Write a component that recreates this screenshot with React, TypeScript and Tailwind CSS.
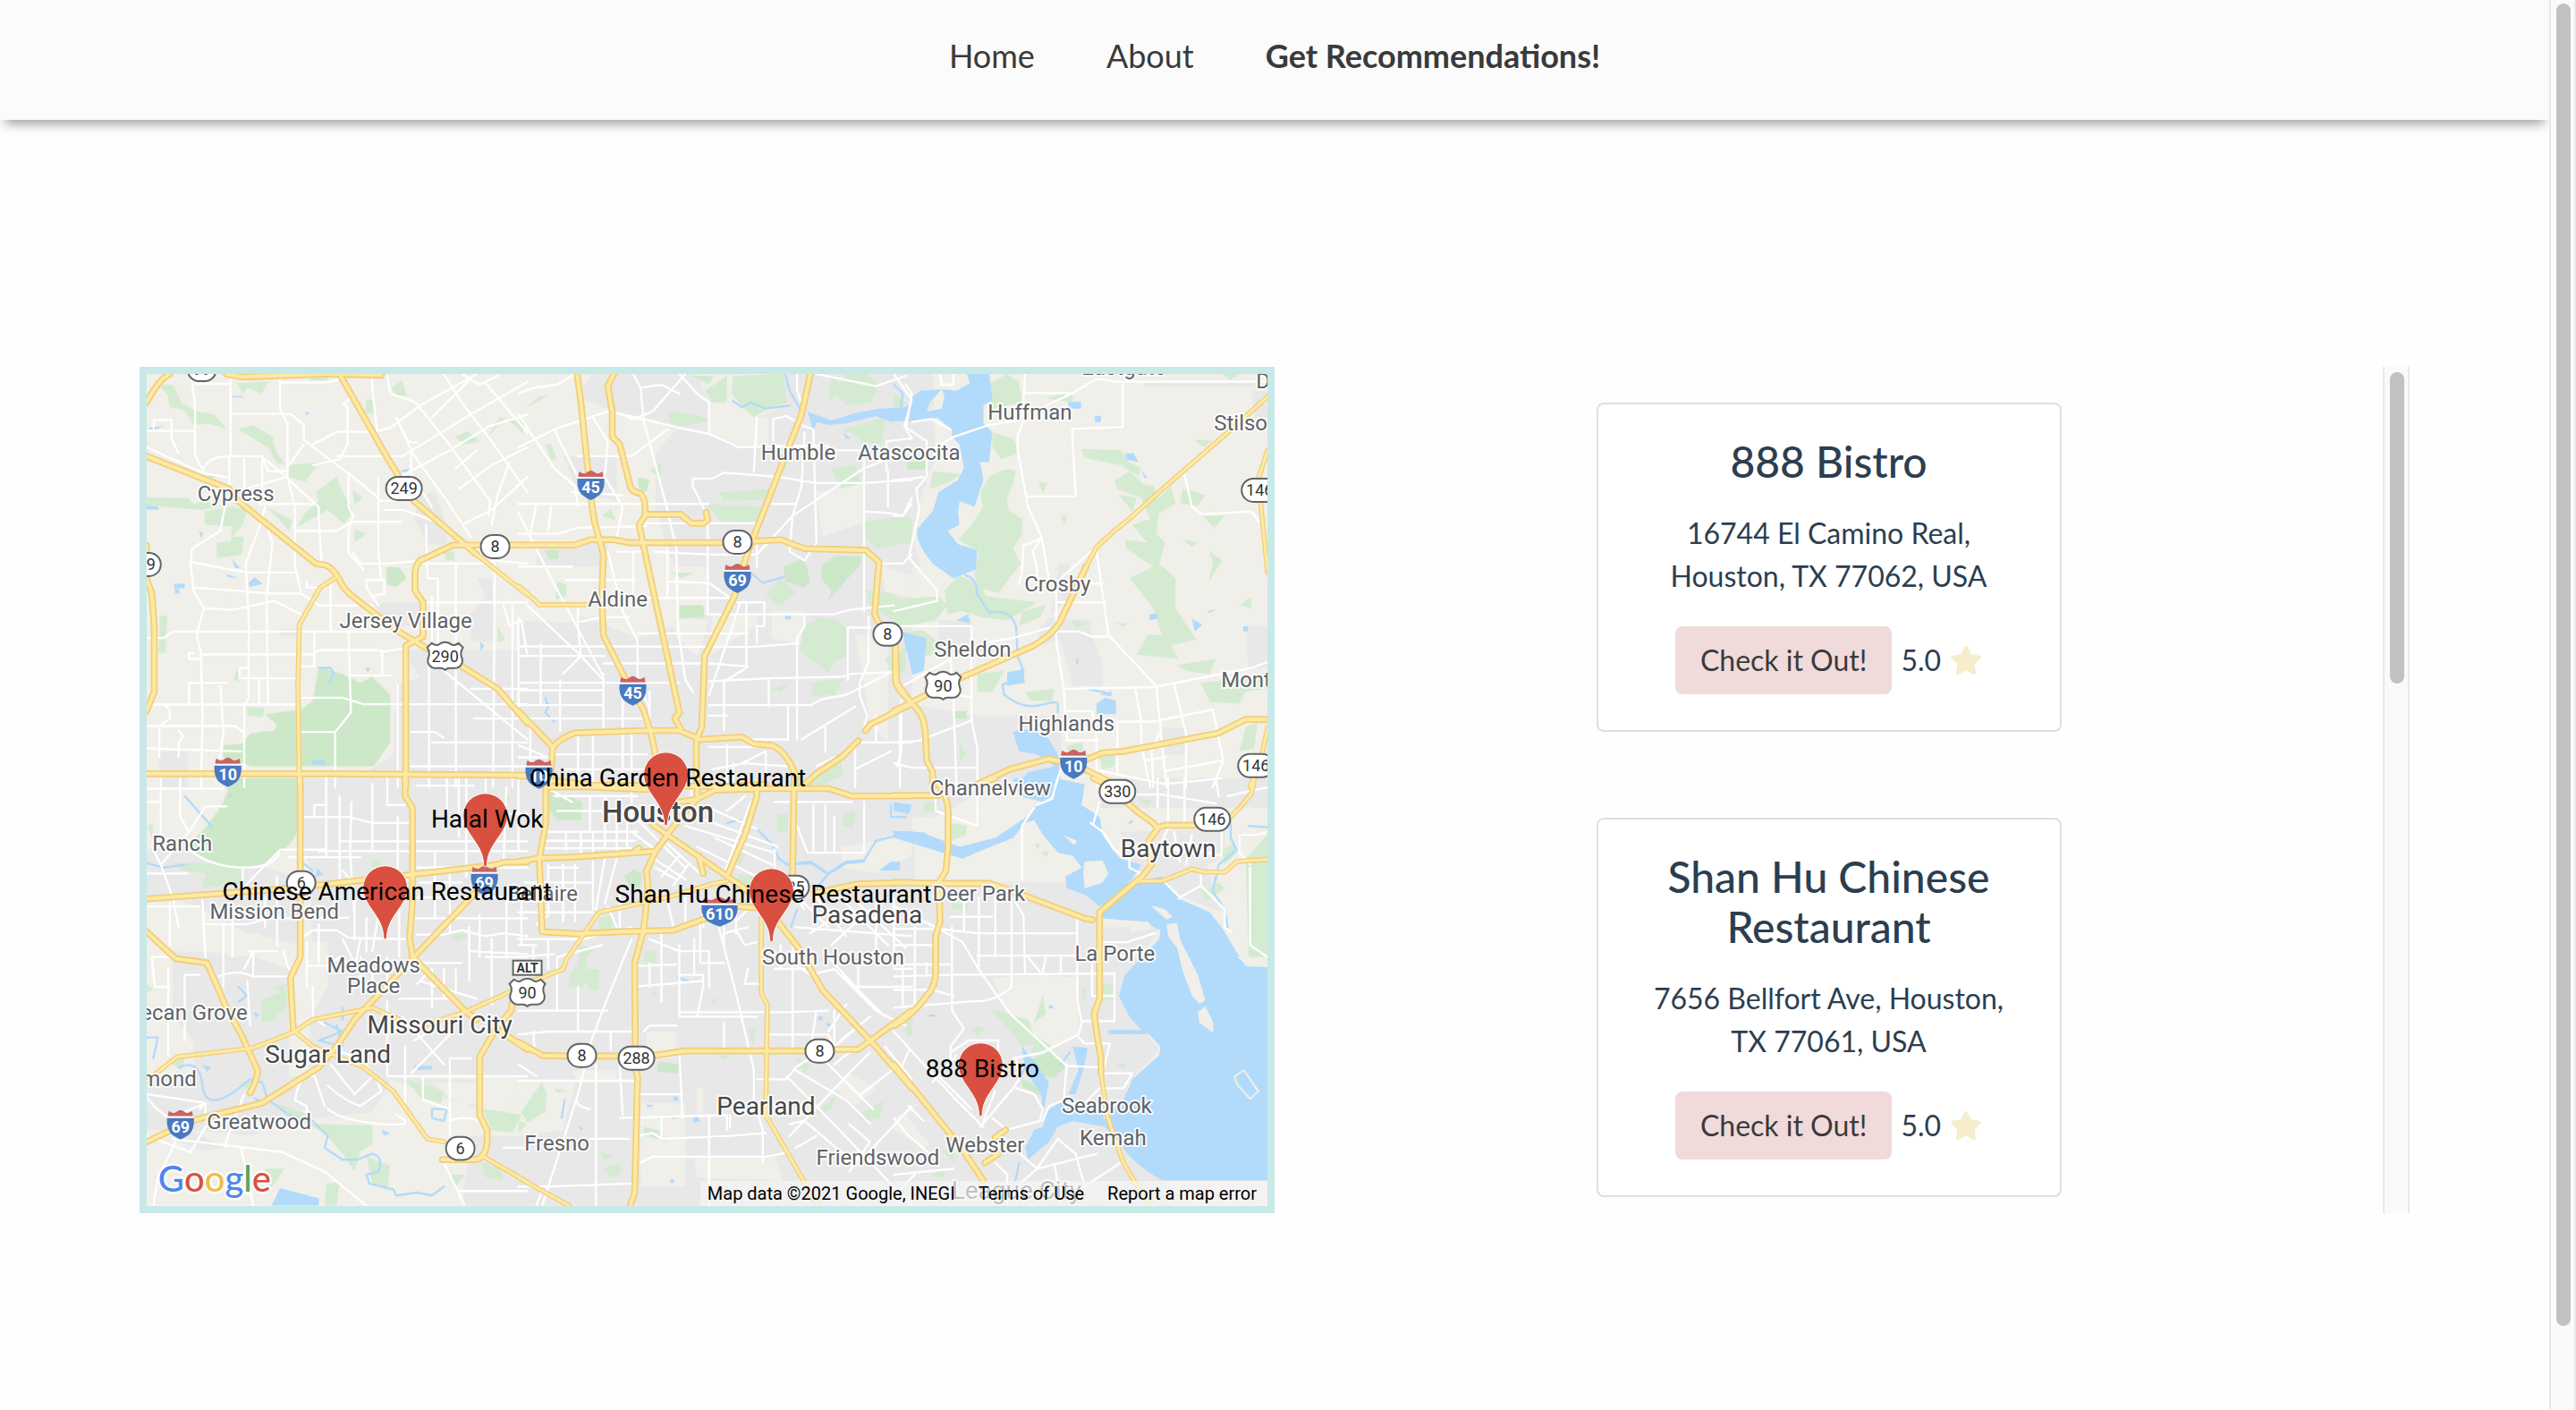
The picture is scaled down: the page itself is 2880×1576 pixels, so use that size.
import { FaStar } from "react-icons/fa";

type Tile = {
  x: number;
  y: number;
  urban: string;
  land?: string;
  parks: string;
  forest?: string;
  water: string;
  rivers: string;
  islands?: string;
  streets: string;
  highways: string;
  roads: string;
};

// Every tile is drawn at three units per map pixel.
const tiles: Tile[] = [
  {
    x: 0,
    y: 0,
    urban:
      "M900 980H1320V1440H700L810 1370 870 1330 880 1100 960 1070Z M960 460L1010 450 1050 560V625H985L940 540Z M1150 740H1200L1210 950H1130V860L1180 800Z M800 820H960V900H860Z M480 910H560V935H490Z M80 1320L180 1320 180 1440H90Z",
    parks:
      "M80 90L130 90 160 150 210 180 270 190 310 238 250 220 200 225 170 175 118 165 115 125Z M345 85L450 80 428 120 380 100 365 120Z M350 240L400 225 465 265 475 310 505 355 480 355 450 300 400 270Z M520 360L620 350 575 415 520 400Z M680 398L690 430 735 515 705 558 650 510 545 568 575 520 620 480 610 450Z M735 445L768 470 740 492Z M740 575L780 590 740 620Z M40 468L180 470 200 490 240 480 290 500 230 510 40 495Z M237 515L330 500 380 510 365 560 330 600 370 600 360 660 278 672 278 620 325 615 330 565 237 560Z M445 500L530 545 520 580 490 545Z M88 865L112 865 105 990 82 990Z M780 140L800 140 805 185 775 185Z M865 100L900 75 915 125 880 130Z M1075 265L1120 245 1160 280 1110 290Z M1185 270L1225 200 1245 200Z M1255 205L1310 220 1305 255Z M335 1080L345 1040 355 1085Z M1220 900L1245 945 1220 955Z M590 60H650V75H590Z M1040 650H1075V680H1045Z M380 1170L440 1175 430 1205 380 1200Z",
    forest:
      "M620 1038L700 1060 760 1090 800 1070 860 1130 860 1290 805 1370 395 1370 300 1340 300 1300 360 1295 390 1260 470 1250 480 1230 440 1195 560 1180 600 1150Z M848 702L890 702 915 738 880 768 848 760Z M380 1410H560V1440H370Z",
    water:
      "M135 758H170V773H135Z M137 775H152V790H137Z M385 755L405 735 432 758 388 768Z M327 672L355 705 340 705Z M595 1350H640V1365H600Z M310 725L350 740 315 735Z M219 578L232 590 225 605Z M42 495L80 500 85 510 42 508Z M50 235L100 228 60 245Z M575 180L592 185 578 192Z M890 380L925 370 915 385Z M250 395L275 402 255 402Z M330 128H365V133H330Z M775 1040L792 1040 785 1055Z M1160 950L1175 965 1165 985Z",
    rivers: "M620 1040H660L672 1060 655 1088",
    streets:
      "M42 245H205M205 87H320M324 54V325M192 54L205 160V325L235 385M325 188H525L570 225V275L655 340 730 395 820 470M490 54V170L515 220V400L540 500V700L560 780M490 83H640L700 70M570 290L520 360M440 340L510 400 620 500V540L630 690M720 140L703 155 717 165V290L690 340 600 360M600 290L630 275 680 248H800L860 235 960 160 1150 54M795 54L815 240M880 200L920 280 950 285M235 370Q250 330 320 330H430L450 380H510M320 330V430M370 340V440L510 400M430 345V440M420 490H600M440 500L420 570 375 690 385 870V1140L370 1170V1440M305 500L290 580 195 640 190 690 200 780 235 840 210 930 225 990 230 1200 225 1440M42 940H100L130 918H880M190 685L380 720H540M200 770L330 780 450 790H560L620 830H800M235 840L330 845 470 815 560 860M450 580L465 620 445 800 450 1160M185 990H200M185 990V1010H220M230 995H600L620 980H810L840 985 900 975M365 1075H550M185 1090H310M185 1090V1160M42 1163H540M355 1075V1040H385M420 1080V1160M100 1163L120 1180V1210L85 1235V1340M42 1235H340L365 1255M42 1310L360 1320M290 1100L300 1250 290 1340M150 1250L165 1270 150 1290V1340M560 1140H700L770 1162H1320M720 920L728 1190 675 1255V1440M565 1255H675M605 920V1035H550M660 750V918M720 1065H860M833 985V1065M720 390V500L735 530 720 580V655L770 710M540 580H680L730 550H900M820 400V650L830 740M820 480H880M840 510H900L960 530 1040 560M735 655L760 690H860L960 680M960 690H1170L1210 680 1320 690M1210 680V820L1205 1440M1130 600L1050 480 935 320 880 200M680 330H900L950 300 1130 190 1320 80M900 395L1060 310 1190 230 1320 190M1110 555L1200 510 1320 400M1190 530L1195 480 1050 280 945 150 920 140 860 120 850 60M1100 54L1160 90 1220 60M1180 85L1320 250M1080 370L1150 310M1320 300L1200 360 1090 440M980 560L985 740H1020V960M1000 800V950M970 820H1320M1080 690V1440M1130 1110H1320M1040 1050L1320 1280M990 1020V1440M885 1100V1440M1000 1290H1320M1140 1210H1320M930 1255H1010L1040 1275M930 1370H1320M1270 830V1440M1240 830L1260 900 1300 880 1320 1000M66 245V208H126V270L150 320M42 300L230 385 310 400M780 745H840V790L800 800M780 745V770L820 830M580 750V770H640M1260 350L1220 460 1200 560M930 320V390L1000 500M1130 70L1000 200M1040 54L1100 150 1200 280 1320 450",
    highways:
      "M42 330L320 440 350 480 610 690 640 695Q665 700 690 745 705 780 740 805L890 920 975 970 1100 1035 1220 1110 1320 1225M690 54L850 335 890 400 940 480 1150 660M42 150Q85 70 120 54M310 54L360 64 650 54 830 58M1320 628H1070L960 680Q945 695 943 720V780L970 820V935L912 965V1440M42 630V740L60 790 68 900V1120L42 1185M42 1395H640L1320 1400",
    roads: "M1150 660L1320 795M675 738L625 770 555 895 550 1100 555 1440",
  },
  {
    x: 1290,
    y: 0,
    urban:
      "M250 54H600L640 150V255L760 300H800V200L860 180 900 54H1320V1440H0V880L200 890V860L400 940 640 860V700L520 700 460 500V320L530 240 300 170 190 130Z M70 620H300V700H60Z M150 330H330V480L200 450Z",
    land:
      "M850 850H960L950 960 850 940Z M650 860H800V900L700 960 640 1000Z M1000 450L1160 420V550L1020 600Z M1130 930H1240V1290L1180 1230 1160 1100Z M520 880H640L600 1000 530 940Z M1220 700L1320 730V800L1230 790Z M640 200H840V290H740L640 250Z",
    parks:
      "M720 60L890 54 900 150 830 175 790 200 750 160 715 120Z M625 110L700 60V150L650 150Z M500 180L600 190 640 210 560 230 510 220Z M675 450L850 440 840 475 690 480Z M630 490L820 500 800 550 680 548Z M1100 54L1170 54 1210 90 1180 150 1100 160 1060 120Z M1090 240L1230 200 1220 290 1150 280 1130 260Z M1160 550L1290 530 1320 540V620L1200 640 1165 600Z M1050 370L1130 360 1150 420 1080 440Z M130 750L160 760 160 800 125 810Z M20 170L70 130 100 125 40 160Z M90 290L110 290 130 340 110 340Z M280 530L310 505 325 545Z M830 790L880 740 930 790 880 830 850 815Z M955 900L1010 870 1070 880 1100 910 1100 1000 1060 1020 1040 1055 980 1010 945 980Z M980 1090L1090 1075 1060 1130 990 1135Z M970 1400L1080 1350 1090 1400 1000 1440H960Z M1165 780L1260 790 1320 850V900H1290L1240 870 1180 830Z M1230 1010L1300 970V1060L1250 1045Z M440 380L480 350 475 400Z M1050 54L1085 100 1040 150Z M575 60H655L640 90Z M510 720L590 720 550 740Z M850 1110L910 1090 880 1120Z",
    forest:
      "M1015 700L1060 665 1150 665 1150 690 1040 815 1050 780 1020 745Z M540 830L620 830 625 870 540 875Z M400 400L440 410 430 450 405 440Z M890 700L960 670 980 750 960 770 895 750Z M90 645H135V675H100Z",
    water:
      "M970 180L1050 210 1130 185 1210 170 1320 165V200L1250 215 1200 195 1100 220 1040 225 1000 215 990 250 985 230Z M1290 920L1320 930V1000L1300 980Z M895 865H915V878H895Z M1090 250L1115 270 1100 272Z M1080 730L1095 740 1085 745Z",
    rivers: "M895 54L910 110 950 180M720 145L750 165 780 150 830 170 910 160M780 720L820 755 890 735M90 1140L100 1170 90 1190 120 1220",
    streets:
      "M0 300L120 240 300 180 350 190 380 205H420L540 235 640 255 740 300 900 295H1040M120 240L200 400M0 190L120 370 190 430 200 500M0 120L50 100 130 90 190 54M385 54L410 100 420 210 495 490 530 640 535 900 560 1080 585 1120M350 190L400 200 450 180 560 54M540 54L600 120 640 150V255M250 200L300 280 290 400 350 500 330 600M0 490H640M0 590H130L200 570 430 565M420 555H800V700M635 560V860M500 640V800M330 650H430M455 650L640 660H800M0 520L110 740 280 1060M0 700H180M160 745H390M385 650V800M380 805H720M500 750L640 755 710 805M300 650L350 850 400 950V1080L440 1180M210 885L280 870H370M200 820V900L210 1000 150 1060M30 830L210 1000 280 1075M400 925H770M0 968H400L780 970 940 958M285 1025H640L770 1035M0 1000H290M0 1090H540M640 1085L840 1075 1080 1070 1120 1060 1250 1055M0 1115H280M0 1165H280M640 1165H980L1020 1145 1100 1130 1240 1060M640 860H1060L1110 845 1260 830M735 820H825V900H800V955M765 820V1040L700 1080M745 820L640 1130M960 860V900L935 940V1280M1105 905V1080M1105 905H1180M1175 870V1020L1145 1090V1130L1170 1200 1160 1240M840 1075V1170M905 1170V1280M690 1080V1250M440 1120V1240M0 1210H420M285 1060V1250M350 1100V1250M640 1200H700M800 200L790 380M855 280V205L900 195 960 230 990 240 1000 620 960 680 910 650 920 530 950 430 960 250M585 405L650 405 690 385 880 400 1000 420H1160L1320 410M585 405V430L630 520M850 490H930M800 660L920 530 1160 370 1320 310M1160 340V850M1160 515L1240 520 1290 530 1320 490M1240 380V500M1060 310H1160M1210 690H1290L1320 660M935 54V110L960 180M1000 54L1080 70 1200 95 1300 60M1300 90L1320 120 1300 240 1320 270 1235 280V380M1030 1240V1320M950 1280L1130 1170M1130 1290H1320M1130 1290V1440M700 1280H905M640 1305H830M750 1360L830 1320M1000 1370L1060 1340M120 1330H430M150 1380H420M200 1250V1440M250 1250V1440M350 1250V1440M380 1250V1440M410 100L480 90 540 120M0 870V1200M75 960V1160M140 1080V1250M0 1300L100 1340M0 1340H110M40 1240V1400M200 330H380L500 240M180 450L350 460M60 490L40 590M110 500L100 580M700 1300V1440M830 1320V1400M650 1380L760 1360 900 1370M1280 1200V1440M1200 1200V1290M720 1360V1440M1130 1380L1250 1320",
    highways:
      "M197 54L210 150 225 300 245 480 255 550 275 620 285 660 280 800 285 930 360 1080 420 1180 445 1260 460 1330 455 1440M320 54L300 95 315 180V265L340 290 375 430Q380 450 410 455 425 470 425 500V530L405 560 540 1190 525 1210 545 1245M425 525H545L580 555H620L635 545 630 518M0 628H190L240 610H320L370 620H690M790 615L880 610 960 640 1165 645 1210 685 1195 860 1215 900M1265 965V1080Q1265 1110 1320 1155M980 54L950 190 770 650 725 800 625 1000 615 1240 597 1280V1440M115 1310Q130 1280 190 1258L430 1250H540L610 1280 750 1272 790 1295 850 1300Q900 1320 930 1400V1440M115 1310L105 1440M0 1185L115 1305M950 1440L1000 1395 1090 1335 1140 1285M1165 1250L1180 1230 1320 1160M0 1403H40M110 1418L250 1433 700 1438 830 1430",
    roads: "M0 765L30 790 70 828H240",
  },
  {
    x: 2550,
    y: 0,
    urban:
      "M0 54H130L140 330 80 500 60 600 90 700H0Z M550 690H590V800L520 870 660 880 665 930 700 1030V1100H600L560 950 500 960 480 920 520 870 545 780Z M270 1200H560V1440H0V1150Z M1180 900H1254V1040H1190Z M1200 110H1254V200H1210Z M840 85H1254V95H840Z M900 1240H980V1330H900Z M150 880H260V960H150Z",
    parks:
      "M310 90L380 54 420 80 430 150 330 170 310 130Z M330 250L400 270 420 320 360 340 330 300Z M320 400Q380 360 410 380L400 420 380 470 385 510 430 540 430 590 400 640 425 690 350 790 285 770 270 730 285 650 215 610 260 560 300 500 290 450Z M170 780L220 730 290 760 310 800 480 820 380 880 300 870 230 850 180 860Z M0 810L150 800 180 830 140 880 30 900H0Z M30 920L100 915 180 980 110 1000Z M630 305L760 310 790 350 830 370 820 395 760 360 640 335Z M740 415L790 380 840 425 870 430 890 470 930 430 945 490 890 520 880 590 910 620 890 690 945 740 945 840 1015 945 930 965 955 1010 815 995 850 930 900 930 870 840 800 750 790 740 870 700 780 640 775 610 850 620 800 560 860 540 830 470 750 440Z M950 1030L1080 1010 1060 1060 980 1050Z M1030 1090L1220 1070 1254 1050V1110L1180 1120 1160 1160 1060 1155Z M1060 650L1100 680 1055 755 1070 690Z M970 610L1020 620 1000 635Z M1035 530L1110 530 1075 572Z M485 415L515 420 500 455Z M1160 830L1200 800V840Z M740 890L790 890 770 900Z M600 880L650 890 610 910Z M1180 1240L1220 1220 1210 1310 1160 1320Z M280 1060L370 1050 330 1120 280 1120Z M440 1120L540 1110 530 1150 460 1150Z M690 1340L740 1330V1370L700 1380Z M0 560L60 540V600H0Z M0 120L40 150 0 210Z M1100 54H1160L1130 75Z M130 380L230 390 180 420 120 440Z M755 460L815 470 800 515Z M560 530H582L572 558Z M220 1280L240 1330 220 1360Z M430 850L510 830 490 870 420 900Z M580 1300L630 1290 640 1325H585Z M510 135L600 110 600 150Z M970 440L1045 460 1020 495 960 490Z M1010 275H1070L1040 300Z",
    forest: "M45 350L110 345V375H45Z M200 1185H245V1210H200Z",
    water:
      "M50 140L90 110 160 105 120 150 110 180 160 170 170 130 160 105 210 110 255 85 245 54H320L330 140 300 160 300 220 330 250 320 350 290 350 300 410 270 500 220 480 215 520 220 560 180 580 215 625 280 645 275 710 200 740 130 690 100 650 80 610 78 575 130 515 150 450 215 410 235 370 220 290 195 265 195 240 145 200 60 215Z M30 920L110 940 100 1050 62 1063Z M680 1160L710 1140 745 1150V1195H680Z M400 1255Q470 1230 520 1280L550 1330 560 1440H400L450 1390 540 1370 480 1330 420 1320Z M585 148H628V170H585Z M675 195H695V215H675Z M775 320L805 320 820 350 780 340Z M1000 875L1035 895 1010 918Z M858 860L885 858V875L858 880Z M1172 900H1188V918H1172Z M210 880L250 860 255 890Z M380 1055L430 1045 440 1090 380 1100Z M690 1130L730 1118V1135Z M832 380L850 400 842 405Z M612 1008H618V1028H612Z M1050 850L1080 843 1060 855Z M0 190L60 150V215L0 210Z",
    rivers:
      "M240 730Q280 740 278 790L320 855Q390 840 410 900L415 1000 435 1050 430 1080 365 1095 370 1130Q430 1180 490 1165T550 1160V1190M650 1110L720 1125M0 90L30 120 20 180",
    streets:
      "M440 54L432 220 415 260V310L450 500 495 600 520 740M435 118H600L680 70 750 80H1254M600 118L510 160M768 80V232L598 238 610 465H450M200 265L320 225 415 210M0 54L60 140 35 230 110 280V400L75 440 85 510 50 670 145 780V815L0 850M200 265L140 300M0 410L100 400M60 215L125 205 190 240M680 650L720 930 880 1100 915 1440M720 935H665L620 918H545M545 770V950L570 1110 580 1280M660 650L560 740M550 820H710M570 1110L870 1105 1050 1070 1200 1040 1254 1020M0 900H260V1210L280 1310V1440M30 1100L190 1010 200 1150 210 1440M310 955L400 940 520 905M0 1290L80 1285 265 1215M0 1360L60 1375H280M25 1150V1320L10 1370M210 1130L265 1140M580 1185H665L680 1280V1440M580 1283H685M750 1220H870L1070 1180 1105 1350 1070 1440M810 1110L830 1220V1300L860 1440M750 1220V1400M940 1095L980 1260V1440M915 1385L1105 1350M690 1385L910 1430 1100 1410M840 1350L910 1340M975 390L1000 500 1035 525 1200 515 1225 550M495 605L435 630 430 720 420 760M495 605L465 650 480 700V740M155 54L160 90H200V54M540 1440L560 1380M660 757H700M890 1260L865 1320 870 1440M0 530L30 530 60 470",
    highways:
      "M645 700L555 890Q530 930 470 965L220 1075 0 1185M5 965L10 1090 55 1155Q100 1190 105 1250L110 1350 130 1390V1440M1254 1213H1180L1085 1260 770 1320 700 1325 640 1350M560 1355L520 1345 390 1380 280 1430M640 1380L720 1420",
    roads:
      "M1254 130L1120 250 890 450 790 540 740 580 680 635 645 700M1254 310L1225 400M1230 480L1254 720M1254 1240L1235 1330M1205 1410L1195 1440",
  },
  {
    x: 0,
    y: 1410,
    urban:
      "M560 0H1320V1000L860 1010 840 1060 590 1060 590 820 600 620 590 300 560 210Z M42 240L150 200 560 340V560L380 520 230 440 120 400H42Z M130 580L380 590 520 640V1000L400 1050 200 1060V880L130 800Z M42 1000H600V1100L400 1200 200 1180H42Z M1130 1200H1320V1434H1100Z M860 1010H1160V1110L1000 1060Z M560 1060H840L800 1120 600 1140Z M200 1180L300 1240 240 1250 130 1210Z",
    land: "M590 550H650V700L600 790 580 640Z M270 520H430V590L320 600Z M1000 1020H1320V1060L1100 1100Z",
    parks:
      "M140 285H370V350L230 370 240 320 160 310Z M425 745L515 710 510 770 480 790 475 815 430 818Z M450 1080L590 1130 600 1160 800 1165V1230L760 1250 740 1320 700 1260 640 1190 520 1130Z M780 1270L860 1300 850 1380 800 1360Z M645 1360L690 1355 680 1434H640Z M1170 1110L1250 1120 1300 1130 1270 1190 1200 1180Z M1165 1290L1230 1310 1240 1350 1180 1340Z M1060 535L1100 515 1120 530 1090 550Z M910 1010L1040 1050 1030 1090 960 1070Z M800 270H825V300H795Z M440 1310L505 1310 450 1390Z M45 160L65 150 60 200Z M460 700L515 690 500 720Z M120 950L170 940 160 980Z M1250 60L1265 60 1250 85Z M350 1020L400 1010 390 1050Z M1060 1330L1110 1330 1080 1370Z M42 690L65 710 42 720Z",
    forest: "M410 0H555V160Q540 230 430 290L350 300 250 280 220 270 180 220Q240 180 300 80L330 0Z",
    water:
      "M490 1375L620 1410V1434H462Z M615 300L635 325 610 330Z M830 1180L860 1190 840 1200Z M400 785L420 790 410 805Z M940 965H1000V978H940Z M230 960L260 970 245 985Z M400 1070L430 1080 415 1090Z M320 50L330 60 320 65Z",
    rivers:
      "M150 970Q220 940 230 1030T340 1050L390 1010 430 1020 450 1080 520 1130 600 1150 650 1200 640 1240 700 1280 750 1280 800 1260Q840 1270 820 1320L780 1330 790 1360 870 1380 880 1400 950 1390 1000 1400 1040 1370M42 870H80L65 940M350 700L380 730 350 750M640 820L700 850 620 880 700 900 680 830M42 285L100 300 170 290M1000 1110L1050 1110 1040 1150 1000 1140ZM170 60L260 160M700 770V810M560 280L600 310",
    streets:
      "M42 35H300M90 0V200M155 0V130L185 180 240 95H310M185 180L90 290 130 400 150 500M185 240Q260 300 370 300T490 240H640M365 300V370M365 370L490 240M42 320H180M565 130H720L800 150H920M605 130V90H645M645 0V260M690 60V340M730 80L725 250 740 460M800 20V240M850 90H910M850 0V90M885 130V330M950 25H1140M1050 0V120M1090 0V200M1115 0V330M1180 0V60M1250 30L1240 280M620 245H1320M520 265H760M690 212H1320M700 310L730 345M950 400H1250M945 470H1320M950 525H1040L1100 510 1180 530 1240 520 1320 530M740 400V540M780 470V580M820 460L800 580M890 340V600M920 540L720 535 680 510H600L570 530M700 540L740 620M760 540L740 640M565 470L720 468M845 340H920M230 410L240 600M230 490H380L450 470H560M330 420V600M440 400V500M480 330V560M300 490V700M60 600H130M60 600L70 700H120M115 640V930M285 665Q340 640 400 665H520M400 580V660M400 580L370 640M385 580H480M380 680L390 830M220 660H170V880M500 580L520 640M580 550V700M620 490V620M580 630H650L690 600M600 700V800L640 830M950 690L1000 640V770M1040 640V740M1080 640V720M960 680L1150 740M890 740H1060M850 750V1000H1320M900 800L1040 960M1060 860L930 990M940 880L1030 830M1125 500V680M1200 540V760M1160 460V600M1130 940H1060V1000M910 900V1090M970 1000V1080L1060 1110V1200M1060 1000V1130M600 1000Q560 980 540 1080L580 1100V1140M600 980L640 1100M660 960L740 1060 800 1000M700 920Q800 950 830 1050L760 1100Q700 1080 650 1030M650 1110Q700 1150 830 1160T880 1130M42 1070Q80 1120 120 1140M120 1140L240 1090 220 1110M42 1060L240 1090V1150M42 1200L190 1255 240 1170M130 1210L500 1255 640 1320 780 1434M140 1220L80 1340 65 1434M370 1060L330 1160 305 1235M360 1240L400 1434M1040 1290L1110 1434M1090 1385H1320M1240 1240H1320M1060 1150Q1100 1130 1160 1150M760 600V700M800 640V720M850 600V680M950 300H1320M960 350H1100M1010 250V470M1060 300V520M1200 100V210M1290 0V240M1130 120H1320M1250 400V600M1300 380V560M1180 600H1320M1130 580L1320 590M950 620H1100M42 80H90M120 420V560M42 430H220M60 230L90 290",
    highways:
      "M42 1220L190 1150 430 1090 620 970 680 900 740 810 940 600 1150 380M42 405L520 370 920 325 1220 290 1240 282 1320 280M910 0V60L935 100V410L925 540 935 600 1110 780 1150 810M1230 850L1320 910M42 515L140 605 245 620 310 770 360 860 415 980Q415 1010 390 1055M1270 750L1265 780 1215 840 1160 935V1130L1185 1180V1220Q1180 1280 1140 1280H1035M558 0V600L525 670 535 845",
    roads:
      "M535 845L600 900 770 970 870 1050 985 1210 1040 1220M42 1020Q60 1000 145 935L400 905 540 850 600 810 800 770 890 810M970 830L1110 785 1265 715M1165 1265L1320 1355",
  },
  {
    x: 1290,
    y: 1410,
    urban: "M0 0H1320V1434H0Z",
    land:
      "M0 1020H190L150 1180 0 1200Z M410 1090H560V1370H410Z M590 1270H860L890 1350 600 1340Z M1080 230L1320 190V260L1200 320 1090 300Z M430 850H530V940H430Z M180 980H330V1020H200Z M1060 1040L1110 990 1200 1040 1130 1100Z M600 1040H620V1150H600Z",
    parks:
      "M270 470L315 460V510H270Z M205 560L260 570 230 600V640L270 640V710L235 710 230 680 210 705 165 700 175 650 200 630Z M425 580L460 580V620L420 615Z M720 250L765 255 740 300Z M735 320L790 330 780 380 735 370Z M770 840L795 840 790 900Z M80 1020L95 1060 90 1120 30 1155 10 1120 50 1060Z M280 1310L340 1290 345 1325 310 1340Z M1140 1130L1230 1080 1210 1140 1150 1150Z M1000 1120L1070 1060 1050 1110 1010 1130Z M1090 120L1130 110 1125 165 1085 160Z M870 120H905V180H870Z M1300 800H1320V860H1305Z M930 940L980 960 960 990Z M420 1170L470 1180 500 1220 420 1200Z M270 1250L320 1270 290 1280Z M0 1150L30 1160 0 1190Z M670 930L710 930 690 945Z M445 730L465 710V735Z M645 740H665L655 760Z M120 1040L170 1050 130 1055Z M490 1130L550 1135 520 1145Z",
    forest: "M100 40L170 60 215 80 210 140 130 140 100 100Z M355 330L385 305 415 320 410 370 370 360Z M470 950L540 960 535 990 465 985Z",
    water:
      "M1210 310L1250 280H1280V310Z M520 1068H535V1082H520Z M585 1140L600 1135 612 1150 588 1155Z M1005 800H1020V812H1005Z M1030 820L1050 825 1040 835Z M650 1198H675V1208H650Z M510 1345H522V1358H510Z M430 1095H450V1103H430Z M205 1165L218 1175 208 1182Z",
    rivers:
      "M700 150L740 140 800 170 850 220 875 270 900 290 980 280 1040 320 1100 280 1160 275 1200 210 1320 180M870 270L910 290 980 285 1040 322 1100 285 1160 280M1040 320L1000 370M935 440L915 500M155 1080L145 1140M1250 90L1250 130 1300 130M535 670L570 680",
    streets:
      "M110 40L180 80 M90 180H400M90 210H390M90 235H380M160 240V180M210 180V260M290 60V230M250 180V260M330 130V260M365 150V230M100 300H200M20 350H250M100 290V460L60 490M150 290V480M190 290V480M250 280V440M290 270L260 440M330 270L290 420M0 450H250M0 400L100 390 200 380M380 180L460 240M400 140L560 300M440 260L560 340M500 220L620 330M460 300L530 340M540 260L480 330M570 290L520 360M560 160L860 250M600 130L870 230M640 100L800 170M660 200L850 290M600 230L800 330M780 80L690 320M860 240V330M935 160L970 250H1160V80M990 90V250M1030 90V250M1060 130V250M860 80H1120M0 780H300M0 540H220L380 500M280 560L130 600V780M50 560V660M100 540V640M380 540L290 760 245 880 200 1060 80 1434M440 620V700M480 520V750M540 560V800H800M590 540V660H560M610 470V620H690M540 660H620V700L600 800M440 540L540 580H640V700M380 700L620 680M400 630L530 625M670 490L730 720 790 980V1080L820 1180V1290M530 830L440 830 420 850M0 860L100 850H390M50 850L55 930M200 700V850M310 850V910M730 510L760 560 800 550M690 520L770 500M770 640L760 690H820M690 820V910M540 785H900L1040 780M840 860H1040L1060 900M920 560V900M1000 780L985 880M930 500L1320 530M920 620L980 660 1060 640 1200 780 1300 830M1040 600L1130 700 1230 800M1060 780V900L1120 850M1100 760L1040 850M1180 800L1080 880M980 520L1040 480M1180 440L1050 560M1080 400L1240 560M1140 420L1300 570M1200 420V600M1260 400V640H1320M1080 660L1130 700H1320M1140 620V700M0 1015H400M260 960V1434M60 1000L0 960M200 1060Q180 1100 240 1110M340 970L350 1130M410 1060H550M540 910L550 1140M340 1140L700 1130V1180M400 1200L450 1190 480 1210 710 1200 830 1190M640 1130V1434M710 1130V1170M480 1140V1210M410 1290L450 1270H830L910 1255M240 1210H370M0 1370H100L380 1360M80 1380L60 1434M800 1010H900L930 970 1010 920M900 1000L1000 1100 1320 1434M930 980L1100 1080 1180 1160M1010 930L1190 1110M910 1200L1100 1000 1180 920M910 1160L960 1150 1090 1260M1110 1160L1180 1220 1110 1320M1320 1100L1180 1250M1000 1200L930 1240M1060 960L1110 920M1150 1060L1280 960M1230 900L1320 1010M240 180V60M120 60H400M130 110H380M480 0V80M380 40V150M620 420V500M560 400V480M500 410L520 500M690 400V560M730 440V520M770 440L730 480M880 330L960 440M940 400L1040 500M1000 400L1100 530M880 560V640M860 640H960M580 0V60M700 0L690 40M760 60L700 110M300 430L330 500M340 380V500M60 560H0M0 600L120 590M0 690L60 640",
    highways:
      "M90 30L200 28 430 38M540 80L600 70 660 40 830 35H1040L1120 60H1320M92 20V150L70 270 80 515 200 522 340 515 520 510 630 470M735 430L800 435M0 280L70 268 180 265 460 245 500 190 560 110 600 70V0M450 155L500 190 600 260 760 370 870 480 940 570 1020 710 1190 890 1320 1040M460 245L430 310 435 370 420 510 390 620 392 890M395 980L400 1000 390 1390 375 1434M700 330L760 190 800 60V35M605 260L620 320M925 0L920 330M1000 385L1140 355 1320 350M0 885L80 930 160 932M265 932H335M455 930L560 915H960M1060 910H1140L1320 780M390 245L405 235",
    roads: "M50 680L150 640 160 610 270 450 500 400 650 355 700 345M815 470V720L835 760 830 1130 1005 1434M0 1340L170 1434",
  },
  {
    x: 2550,
    y: 1410,
    urban:
      "M0 350H690V600H870L790 640 755 730 790 800 830 840 720 860 850 860 890 910 790 1020 770 1090 700 1120 830 1280 900 1350 1000 1434H0Z M760 180L1110 170V260L1050 290 1100 450 970 400 870 340 800 310Z M690 0H1254V100H690Z M40 0H380L140 130H0V80Z M0 220H70V350H0Z M690 500H890L850 570 700 610Z",
    land: "M330 670L500 660 620 670V860L520 910 430 840 360 740Z M100 1080L40 1130 120 1230 100 1240 0 1180V1140Z",
    parks:
      "M180 150L245 160 240 190 195 210Z M325 775L450 810 470 860 530 900 460 930 470 890 430 900 400 860Z M1030 380L1090 350 1110 370 1050 410Z M1180 270L1254 190V600H1190Z M1100 240L1140 220 1150 250 1110 290Z M260 840L285 830 310 845 280 860Z M470 820L500 730 510 790Z M630 700L645 710 635 755Z M100 80L150 85 140 115 100 110Z M740 960L785 955 770 975Z M700 690H735V750L700 740Z M190 420L250 420 245 440H195Z M40 810H60V865H40Z M160 1250L200 1240V1290Z M470 220L490 220 485 240Z M495 245L520 245 512 265Z M820 70L870 75 850 95Z M125 1330L170 1315V1340Z",
    forest: "M455 945L525 915 580 965 540 1005 470 990Z M430 1010L510 1040 495 1065 430 1035Z",
    water:
      "M540 0L640 20 630 90 690 130 700 190 735 240 760 270 830 290 800 340 740 370 690 430 640 390 580 370 575 330 630 300 600 260 550 250 500 190 470 140 440 150 400 200 300 240 230 270 0 200V180L100 185 220 230 340 200 460 120 480 90 540 60Z M700 440L760 400 860 385 970 410 1060 450 1100 500 1160 600 1180 630 1254 635V1350H900Q800 1290 770 1240L700 1160 720 1120 770 1080 800 1010 890 930 895 900 855 858 720 860V845H830L790 800 755 730 775 660 890 540 895 510 830 480 700 470Z M690 440L720 360 900 330 960 400 740 470Z M510 1120L560 1085 620 1100 700 1120 710 1170 600 1150 550 1170 520 1220 450 1280 440 1240 470 1180 500 1170Z M600 900L650 905 640 960 610 1060 585 1060 620 980Z M430 900L480 960 520 1020 500 1130 495 1060 440 980Z M400 0H560V40L500 80 420 60Z M0 80L60 90 50 120 0 110Z M520 762H533V773H520Z M118 793H140V800H118Z",
    rivers:
      "M0 180L100 185 160 220 240 245 340 220 460 130M420 1010L440 970M390 1400L410 1340 420 1290M1080 330L1070 380 1110 440 1120 500M1130 130V200L1150 240 1090 290 1080 340M590 920L560 960M1254 165L1190 160M790 150L800 145",
    islands:
      "M640 280L700 275 720 320 700 350 640 370 635 310Z M860 425L910 440 935 465 915 475Z M915 490L950 485 960 540 990 600 1020 660 1045 745 1025 757 1000 730 970 650 950 570 920 530Z M1045 765L1072 820V855L1025 820 1020 785Z M780 490L850 480 870 500 800 520Z M565 190L615 210 605 225Z M1150 600L1254 600V625L1190 630Z M1138 1000L1175 975 1227 1050 1195 1080 1150 1030Z M1146 1003L1156 1027 1196 1072 1219 1050 1173 983Z",
    streets:
      "M190 465H330M235 400V510M285 400V630M340 400V600M395 400V700Q340 750 270 748L0 770M430 340V160L470 100M480 90L530 70 550 0M410 420L435 460 440 660M0 505H150L280 520H615M280 595H620M160 510L230 550 290 650 390 790 580 965 700 970M0 665L200 660 740 655M615 470V740L630 820 620 860 500 920 400 940M740 655V815H635M665 620V730H740M195 500V780L235 840 190 900V950M70 500V760M30 600V760M110 620V660M0 625H190M0 710H130L200 730M450 600L490 650M510 600L500 650M560 600V650M700 550H780L875 520M660 150L700 180 740 240 790 270M690 80L670 150M810 55H900L1080 85M920 0V160M975 0V160M1080 0L1090 60M885 0V100M920 170L900 210 920 240M940 180L960 280M1000 190L980 290M880 240H1000L1100 260V180M790 270V300L830 320M910 350L960 400 1030 360V320M1030 360L1110 440V500L1130 515M1195 300V560L1254 600M1170 190H1220L1254 180M1160 190V250L1195 290M140 60V110L280 160V0M190 920L250 880H350V930M410 940L420 1010 400 1040 290 1170M410 1040L470 1060 500 1110 490 1150 380 1180 330 1140M580 960L570 1080 520 1100 500 1150M620 870L640 890H725L700 990H800L770 1040H690L640 1090M0 850L200 1070 300 1170M50 915L20 980M130 1020L210 930M140 990L260 1110M0 1140L50 1200 120 1260M50 1100L100 1150M0 1330L200 1310M390 1230L480 1310 680 1260M480 1310L550 1210 610 1260 640 1370M480 1310L380 1400M540 1300L560 1420M640 1370L760 1290M340 1290L380 1330V1434M70 1330L20 1380M0 560H130M0 430L140 500M340 1050L300 1150M1254 30L1120 60",
    highways:
      "M130 0Q180 50 182 110V220L175 310 150 350 155 480 140 530V650Q140 700 110 730 60 800 0 830M0 350L160 353H320L440 395 640 470 665 475M820 340L760 390 690 450V740L672 790Q680 860 695 940V990M780 80L820 115 870 150 885 170 855 210 865 290 820 345M885 165L910 158H1010M0 960L170 1170 240 1260 300 1350M375 1180L340 1205M305 1290L350 1260M0 58H150M285 18L340 0M670 0L700 15",
    roads: "M695 990L715 1130 770 1290 855 1434M1130 130L1160 100 1200 50 1210 0M830 345H900L1000 305 1040 315H1110L1150 280 1254 272",
  },
];

const towns: [string, number, number, ("start" | "end")?][] = [
  ["Cypress", 100, 142],
  ["Jersey Village", 290, 284],
  ["Humble", 729, 96],
  ["Atascocita", 853, 96],
  ["Aldine", 527, 260],
  ["Huffman", 988, 51],
  ["Eastgate", 1093, 1],
  ["Dayton", 1241, 16, "start"],
  ["Stilson", 1194, 63, "start"],
  ["Crosby", 1019, 243],
  ["Sheldon", 924, 316],
  ["Highlands", 1029, 399],
  ["Mont", 1202, 350, "start"],
  ["Channelview", 944, 471],
  ["Deer Park", 931, 589],
  ["La Porte", 1083, 656],
  ["Seabrook", 1074, 826],
  ["Kemah", 1081, 862],
  ["Webster", 938, 870],
  ["Friendswood", 818, 884],
  ["Fresno", 459, 868],
  ["South Houston", 768, 660],
  ["Bellaire", 443, 589],
  ["Ranch", 40, 533],
  ["Mission Bend", 143, 609],
  ["Meadows", 254, 669],
  ["Place", 254, 692],
  ["Pecan Grove", 113, 722, "end"],
  ["Richmond", 56, 796, "end"],
  ["Greatwood", 126, 844],
];

const cities: [string, number, number][] = [
  ["Baytown", 1143, 540],
  ["Pasadena", 806, 614],
  ["Missouri City", 328, 737],
  ["Sugar Land", 203, 770],
  ["Pearland", 693, 828],
  ["League City", 973, 922],
];

const stateRoutes: [string, number, number][] = [
  ["99", 62, -5],
  ["99", 0, 213],
  ["249", 288, 128],
  ["8", 390, 193],
  ["8", 661, 188],
  ["8", 829, 291],
  ["146", 1245, 130],
  ["146", 1241, 438],
  ["146", 1192, 498],
  ["330", 1086, 467],
  ["6", 173, 569],
  ["225", 721, 574],
  ["8", 487, 762],
  ["288", 548, 765],
  ["8", 753, 757],
  ["6", 351, 866],
];

const usRoutes: [string, number, number][] = [
  ["290", 334, 316],
  ["90", 891, 349],
  ["90", 426, 692],
];

const interstates: [string, number, number][] = [
  ["45", 497, 125],
  ["45", 544, 355],
  ["69", 661, 229],
  ["10", 91, 446],
  ["10", 439, 448],
  ["10", 1037, 437],
  ["69", 378, 567],
  ["610", 641, 602],
  ["69", 38, 840],
];

const pins: [string, number, number][] = [
  ["China Garden Restaurant", 581, 505],
  ["Halal Wok", 379, 551],
  ["Chinese American Restaurant", 267, 632],
  ["Shan Hu Chinese Restaurant", 699, 635],
  ["888 Bistro", 933, 830],
];

const restaurants = [
  { name: "888 Bistro", address: "16744 El Camino Real, Houston, TX 77062, USA", rating: "5.0" },
  { name: "Shan Hu Chinese Restaurant", address: "7656 Bellfort Ave, Houston, TX 77061, USA", rating: "5.0" },
];

function Layer({ part, className, width }: { part: keyof Omit<Tile, "x" | "y">; className: string; width?: number }) {
  return (
    <g className={className} strokeWidth={width} strokeLinecap="round" strokeLinejoin="round">
      {tiles.map((tile) => (
        <path key={`${tile.x}-${tile.y}`} d={tile[part] ?? ""} transform={`translate(${tile.x} ${tile.y})`} />
      ))}
    </g>
  );
}

function StateShield({ name, x, y }: { name: string; x: number; y: number }) {
  const width = name.length > 2 ? 40 : 32;
  return (
    <g transform={`translate(${x} ${y})`}>
      <rect x={-width / 2} y={-13} width={width} height={26} rx={13} className="fill-white stroke-[#636466]" strokeWidth={2} />
      <text y={6} textAnchor="middle" fontSize={18} className="fill-[#333]">
        {name}
      </text>
    </g>
  );
}

function UsShield({ name, x, y }: { name: string; x: number; y: number }) {
  return (
    <g transform={`translate(${x} ${y})`}>
      <path
        d="M-15-15Q-11-12-8-13Q-4-16 0-16Q4-16 8-13Q11-12 15-15L20-10Q17-6 18-1Q20 4 19 7Q17 12 12 13H5Q2 13 0 15Q-2 13-5 13H-12Q-17 12-19 7Q-20 4-18-1Q-17-6-20-10Z"
        className="fill-white stroke-[#636466]"
        strokeWidth={2}
      />
      <text y={6} textAnchor="middle" fontSize={18} className="fill-[#333]">
        {name}
      </text>
    </g>
  );
}

function InterstateShield({ name, x, y }: { name: string; x: number; y: number }) {
  return (
    <g transform={`translate(${x} ${y})`}>
      <g transform={name.length > 2 ? "scale(1.33 1)" : undefined}>
        <path d="M-14-10L-14-12L-13-16Q-9-13-6-14Q-2-17 0-17Q2-17 6-14Q9-13 13-16L14-10Z" className="fill-[#ca6462]" />
        <path d="M-15-10H15V-8H-15Z" className="fill-white" />
        <path d="M-15-8H15Q16 4 10 10Q5 14 0 16Q-5 14-10 10Q-16 4-15-8Z" className="fill-[#477ac2]" />
      </g>
      <text y={8} textAnchor="middle" fontSize={18} className="fill-white font-bold">
        {name}
      </text>
    </g>
  );
}

function CityMap() {
  return (
    <div className="relative h-[60vh] w-1/2 shrink-0 overflow-hidden border-8 border-[#c7e9e7] font-[Roboto,sans-serif]">
      <svg viewBox="0 0 1254 930" preserveAspectRatio="xMidYMid slice" className="block h-full w-full" role="img" aria-label="Map of Houston">
        <rect width={1254} height={930} className="fill-[#f0efe9]" />
        <g transform="translate(-14 -18) scale(0.33333)">
          <Layer part="urban" className="fill-[#e8e8e8]" />
          <Layer part="land" className="fill-[#f0efe9]" />
          <Layer part="parks" className="fill-[#d4ebd1]" />
          <Layer part="forest" className="fill-[#cde8c9]" />
          <Layer part="water" className="fill-[#b2dafb]" />
          <Layer part="rivers" className="fill-none stroke-[#b2dafb]" width={7} />
          <Layer part="islands" className="fill-[#f0efe9]" />
          <Layer part="streets" className="fill-none stroke-white" width={7} />
          <Layer part="roads" className="fill-none stroke-[#f1cf78]" width={17} />
          <Layer part="highways" className="fill-none stroke-[#f1cf78]" width={23} />
          <Layer part="roads" className="fill-none stroke-[#fdeaa8]" width={9} />
          <Layer part="highways" className="fill-none stroke-[#fde9a6]" width={12} />
        </g>

        <g className="stroke-white/80 [paint-order:stroke]" strokeWidth={4} strokeLinejoin="round">
          {towns.map(([name, x, y, anchor]) => (
            <text key={name} x={x} y={y} textAnchor={anchor ?? "middle"} fontSize={24} className="fill-[#5f6368]">
              {name}
            </text>
          ))}
          {cities.map(([name, x, y]) => (
            <text key={name} x={x} y={y} textAnchor="middle" fontSize={28} className="fill-[#474747]">
              {name}
            </text>
          ))}
          <text x={572} y={501} textAnchor="middle" fontSize={33} className="fill-[#474747] font-medium">
            Houston
          </text>
        </g>

        {stateRoutes.map(([name, x, y]) => (
          <StateShield key={`${x}-${y}`} name={name} x={x} y={y} />
        ))}
        <rect x={410} y={656} width={32} height={16} className="fill-white stroke-[#636466]" strokeWidth={2} />
        <text x={426} y={669} textAnchor="middle" fontSize={14} className="fill-[#333] font-bold">
          ALT
        </text>
        {usRoutes.map(([name, x, y]) => (
          <UsShield key={`${x}-${y}`} name={name} x={x} y={y} />
        ))}
        {interstates.map(([name, x, y]) => (
          <InterstateShield key={`${x}-${y}`} name={name} x={x} y={y} />
        ))}

        {pins.map(([name, x, y]) => (
          <path
            key={name}
            transform={`translate(${x} ${y})`}
            d="M0 0C-2 0-2-2-2-5C-4-27-25-38-25-57A25 25 0 0 1 25-57C25-38 4-27 2-5C2-2 2 0 0 0Z"
            className="fill-[#d95040] stroke-white"
            strokeWidth={1}
          />
        ))}
        {pins.map(([name, x, y]) => (
          <text key={name} x={x + 2} y={y - 44} textAnchor="middle" fontSize={28} className="fill-black">
            {name}
          </text>
        ))}

        <text x={13} y={914} fontSize={40} strokeWidth={5} className="stroke-white/80 font-[Lato,sans-serif] font-medium [paint-order:stroke]">
          <tspan className="fill-[#4f86ec]">G</tspan>
          <tspan className="fill-[#d95040]">o</tspan>
          <tspan className="fill-[#f2bd42]">o</tspan>
          <tspan className="fill-[#4f86ec]">g</tspan>
          <tspan className="fill-[#58a55c]">l</tspan>
          <tspan className="fill-[#d95040]">e</tspan>
        </text>
      </svg>

      <div className="absolute right-0 bottom-0 flex h-7 items-center gap-[26px] bg-[#f5f5f5]/70 pr-3 pl-2 text-[20px] leading-7 text-black">
        <span>Map data ©2021 Google, INEGI</span>
        <a href="#terms">Terms of Use</a>
        <a href="#report">Report a map error</a>
      </div>
    </div>
  );
}

function RestaurantCard({ name, address, rating }: { name: string; address: string; rating: string }) {
  return (
    <article className="w-[520px] rounded-lg border-2 border-[#dfdfdf] bg-white px-10 pt-9 pb-10 text-center text-[#2c3e50]">
      <h2 className="text-[48px] leading-[56px] font-medium">{name}</h2>
      <p className="mt-7 text-[32px] leading-[48px]">{address}</p>
      <div className="mt-8 flex items-center justify-center gap-[10px] text-[32px]">
        <button type="button" className="h-[76px] rounded-lg bg-[#f0dada] px-7 text-[#3a3a3a]">
          Check it Out!
        </button>
        <span>{rating}</span>
        <FaStar className="size-9 text-[#f5edcc]" />
      </div>
    </article>
  );
}

export default function App() {
  return (
    <div className="flex min-h-screen bg-[#fefefe] font-[Lato,sans-serif]">
      <div className="min-w-0 flex-1 overflow-hidden">
        <header className="h-[134px] bg-[#fbfbfb] shadow-[0_10px_12px_-6px_#999]">
          <nav className="flex justify-center gap-20 pt-[38px] text-[36px] leading-[48px] text-[#3a3a3a]">
            <a href="#home">Home</a>
            <a href="#about">About</a>
            <a href="#recommendations" className="font-bold">
              Get Recommendations!
            </a>
          </nav>
        </header>

        <main className="mt-69 flex px-39">
          <CityMap />
          <section className="flex h-[60vh] min-w-0 flex-1 overflow-hidden">
            <div className="flex flex-1 flex-col items-center gap-24 pt-10">
              {restaurants.map((restaurant) => (
                <RestaurantCard key={restaurant.name} {...restaurant} />
              ))}
            </div>
            <div className="w-[30px] border-x-2 border-[#e8e8e8] bg-[#fafafa] pt-[6px] pl-[6px]">
              <div className="h-[37%] w-4 rounded-full bg-[#c1c1c1]" />
            </div>
          </section>
        </main>
      </div>

      <div className="h-screen w-[30px] border-x-2 border-[#e8e8e8] bg-[#fafafa] pt-1 pl-[6px]">
        <div className="h-[94%] w-4 rounded-full bg-[#c1c1c1]" />
      </div>
    </div>
  );
}
